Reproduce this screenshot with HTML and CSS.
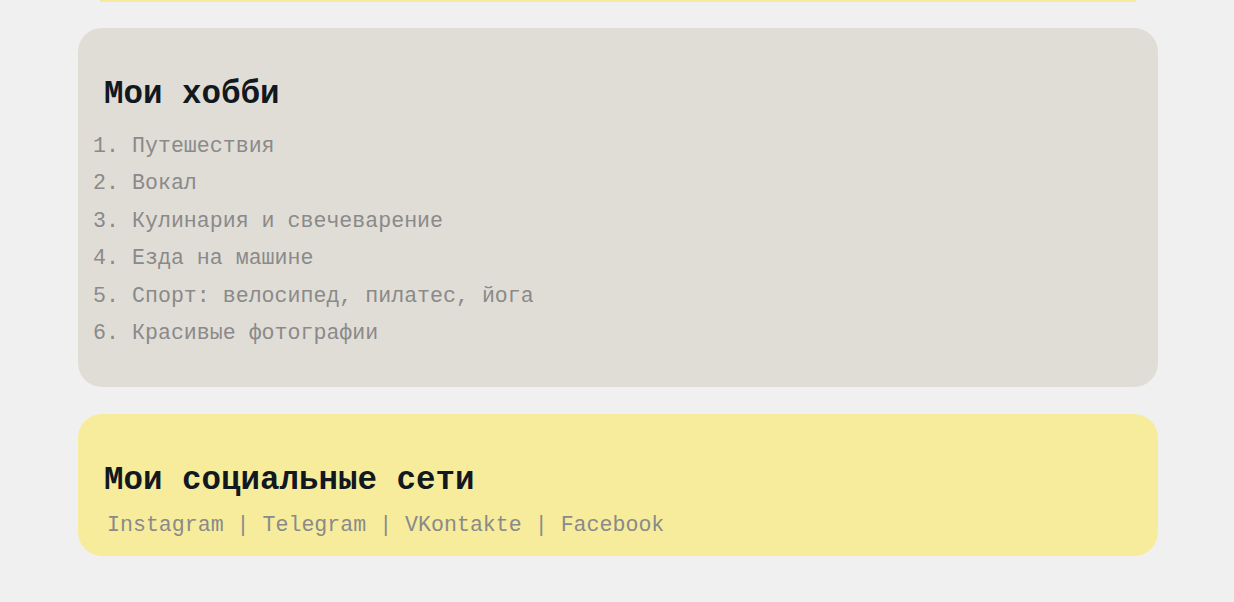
FILE: index.html
```html
<!DOCTYPE html>
<html lang="ru">
<head>
<meta charset="utf-8">
<title>Мои хобби</title>
<link rel="stylesheet" href="styles.css">
</head>
<body>
<div class="topline"></div>
<main class="page">
  <section class="card card-hobby">
    <h2 class="card-title">Мои хобби</h2>
    <ol class="hobby-list">
      <li>Путешествия</li>
      <li>Вокал</li>
      <li>Кулинария и свечеварение</li>
      <li>Езда на машине</li>
      <li>Спорт: велосипед, пилатес, йога</li>
      <li>Красивые фотографии</li>
    </ol>
  </section>
  <section class="card card-social">
    <h2 class="card-title">Мои социальные сети</h2>
    <p class="links"><a href="#">Instagram</a> | <a href="#">Telegram</a> | <a href="#">VKontakte</a> | <a href="#">Facebook</a></p>
  </section>
</main>
</body>
</html>
```

FILE: styles.css
```css
html, body {
  margin: 0;
  padding: 0;
}
body {
  background: #f0f0f0;
  font-family: "Courier New", "Nimbus Mono PS", "Nimbus Mono L", "FreeMono", Courier, "Liberation Mono", monospace;
  color: #8a8a8a;
}
.topline {
  height: 2px;
  margin: 0 98px 0 100px;
  background: #f6eb9c;
}
.page {
  width: 1080px;
  margin: 26px auto 0 78px;
  display: flex;
  flex-direction: column;
  gap: 27px;
}
.card {
  border-radius: 24px;
  padding: 0 26px;
}
.card-hobby {
  background: #e0ddd6;
  padding-top: 49px;
  padding-bottom: 35px;
}
.card-social {
  background: #f6ec9c;
  padding-top: 49px;
  padding-bottom: 14px;
}
.card-title {
  margin: 0;
  font-size: 32.5px;
  line-height: 36px;
  font-weight: bold;
  color: #111820;
}
.hobby-list {
  margin: 15px 0 0 0;
  padding-left: 28px;
  font-size: 21.6px;
  line-height: 37.4px;
}
.links {
  margin: 9px 0 0 3px;
  font-size: 21.6px;
  line-height: 34px;
}
.links a {
  color: #8a8a8a;
  text-decoration: none;
}
```
